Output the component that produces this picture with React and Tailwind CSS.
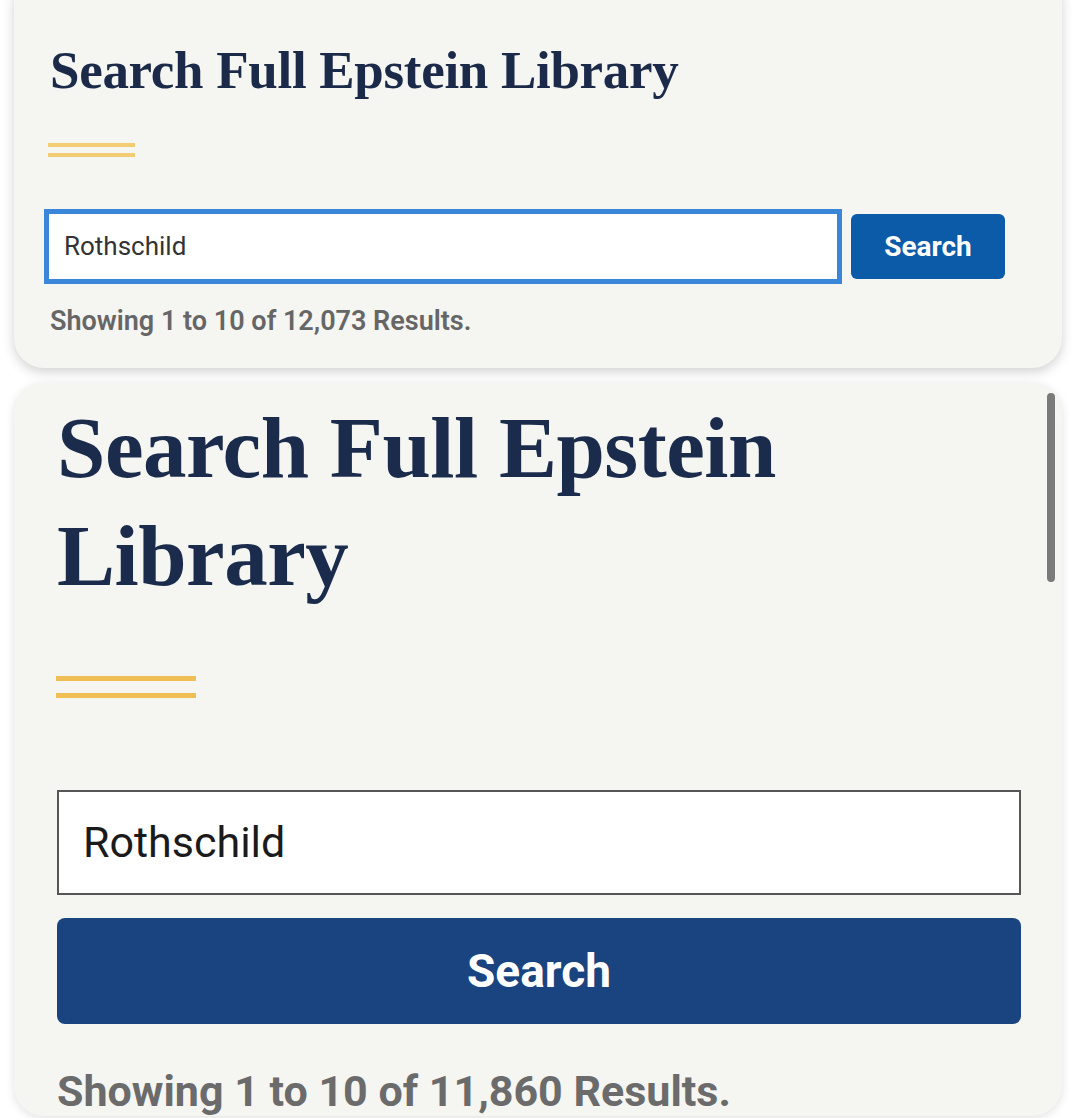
export default function App() {
  const serif = { fontFamily: '"Liberation Serif", "DejaVu Serif", serif' };
  const sans = { fontFamily: 'Roboto, "Liberation Sans", Arial, sans-serif' };

  return (
    <div className="w-[1084px] h-[1118px] bg-white overflow-hidden flex flex-col gap-[15px] pl-[14px]">
      {/* small screenshot card */}
      <div className="relative -mt-[28px] w-[1048px] h-[396px] shrink-0 rounded-[30px] bg-[#f5f5f2] shadow-[0_4px_12px_rgba(0,0,0,0.18)] pl-[36px] pt-[68px]">
        <h1 style={serif} className="text-[53px] leading-[60px] font-bold text-[#1c2a4a] tracking-[-0.3px]">
          Search Full Epstein Library
        </h1>
        <div className="mt-[43px] flex flex-col gap-[6px] w-[87px] -ml-[2px]">
          <div className="h-[4px] bg-[#f2cd74]" />
          <div className="h-[4px] bg-[#f2cd74]" />
        </div>
        <div className="mt-[52px] -ml-[6px] flex items-center gap-[9px]">
          <div className="w-[798px] h-[75px] border-[5px] border-[#3a86d8] bg-white flex items-center pl-[15px]">
            <span style={sans} className="text-[26px] text-[#333]">Rothschild</span>
          </div>
          <button style={sans} className="w-[154px] h-[65px] rounded-[6px] bg-[#0b5ba8] text-white font-bold text-[28px]">
            Search
          </button>
        </div>
        <p style={sans} className="mt-[22px] text-[27px] leading-[30px] font-semibold text-[#666]">
          Showing 1 to 10 of 12,073 Results.
        </p>
      </div>

      {/* large screenshot card */}
      <div className="relative w-[1048px] h-[733px] shrink-0 rounded-[30px] bg-[#f5f5f2] shadow-[0_2px_10px_rgba(0,0,0,0.12)] pl-[43px] pr-[41px] pt-[11px]">
        <div className="absolute right-[7px] top-[10px] w-[8px] h-[189px] rounded-full bg-[#7a7a7a]" />
        <h1 style={serif} className="text-[87px] leading-[108px] font-bold text-[#1a2b4c] tracking-[-0.5px]">
          Search Full Epstein
          <br />
          Library
        </h1>
        <div className="mt-[66px] flex flex-col gap-[12px] w-[140px] -ml-[1px]">
          <div className="h-[5px] bg-[#efbf55]" />
          <div className="h-[5px] bg-[#efbf55]" />
        </div>
        <div className="mt-[92px] h-[105px] border-2 border-[#565656] bg-white flex items-center pl-[24px]">
          <span style={sans} className="text-[43px] text-[#1b1b1b]">Rothschild</span>
        </div>
        <button style={sans} className="mt-[23px] w-full h-[106px] rounded-[8px] bg-[#1a4480] text-white font-bold text-[46px]">
          Search
        </button>
        <p style={sans} className="mt-[42px] text-[43px] leading-[50px] font-bold text-[#6b6b6b]">
          Showing 1 to 10 of 11,860 Results.
        </p>
      </div>
    </div>
  );
}
